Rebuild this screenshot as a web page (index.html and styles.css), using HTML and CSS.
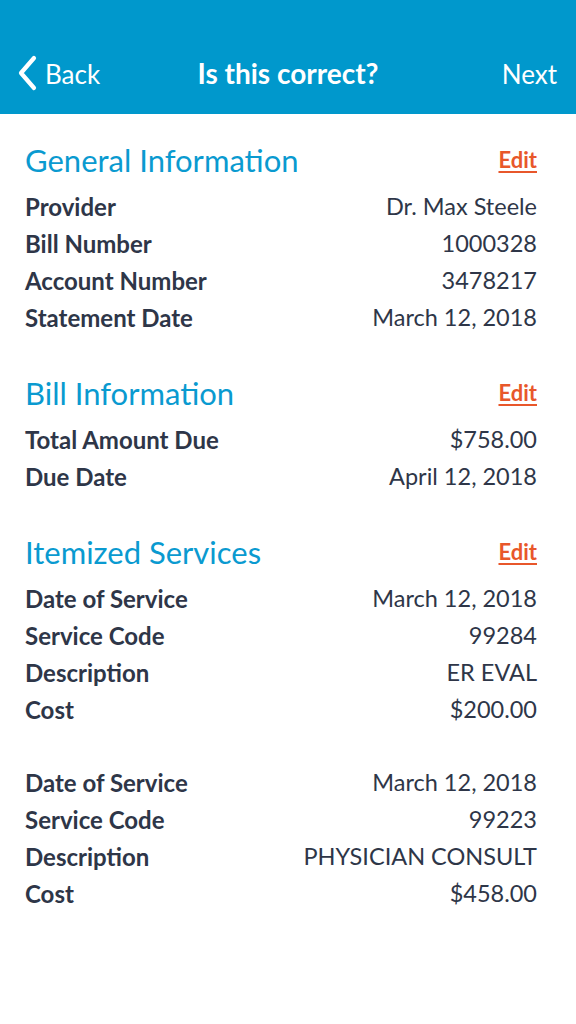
FILE: index.html
```html
<!DOCTYPE html>
<html>
<head>
<meta charset="utf-8">
<link rel="stylesheet" href="styles.css">
</head>
<body>
<header class="topbar">
  <div class="nav">
    <a class="back">
      <svg class="chev" width="22" height="36" viewBox="0 0 22 36"><path d="M17 3 L4 18 L17 33" fill="none" stroke="#fff" stroke-width="4.2" stroke-linecap="round" stroke-linejoin="round"/></svg>
      <span>Back</span>
    </a>
    <div class="title">Is this correct?</div>
    <a class="next">Next</a>
  </div>
</header>
<main class="content">
  <section class="section">
    <div class="sec-head"><h2>General Information</h2><a class="edit">Edit</a></div>
    <div class="group">
      <div class="row"><span class="label">Provider</span><span class="value">Dr. Max Steele</span></div>
      <div class="row"><span class="label">Bill Number</span><span class="value">1000328</span></div>
      <div class="row"><span class="label">Account Number</span><span class="value">3478217</span></div>
      <div class="row"><span class="label">Statement Date</span><span class="value">March 12, 2018</span></div>
    </div>
  </section>
  <section class="section">
    <div class="sec-head"><h2>Bill Information</h2><a class="edit">Edit</a></div>
    <div class="group">
      <div class="row"><span class="label">Total Amount Due</span><span class="value">$758.00</span></div>
      <div class="row"><span class="label">Due Date</span><span class="value">April 12, 2018</span></div>
    </div>
  </section>
  <section class="section">
    <div class="sec-head"><h2>Itemized Services</h2><a class="edit">Edit</a></div>
    <div class="group">
      <div class="row"><span class="label">Date of Service</span><span class="value">March 12, 2018</span></div>
      <div class="row"><span class="label">Service Code</span><span class="value">99284</span></div>
      <div class="row"><span class="label">Description</span><span class="value">ER EVAL</span></div>
      <div class="row"><span class="label">Cost</span><span class="value">$200.00</span></div>
    </div>
    <div class="group">
      <div class="row"><span class="label">Date of Service</span><span class="value">March 12, 2018</span></div>
      <div class="row"><span class="label">Service Code</span><span class="value">99223</span></div>
      <div class="row"><span class="label">Description</span><span class="value">PHYSICIAN CONSULT</span></div>
      <div class="row"><span class="label">Cost</span><span class="value">$458.00</span></div>
    </div>
  </section>
</main>
</body>
</html>
```
FILE: styles.css
```css
* { box-sizing: border-box; }
html, body { margin: 0; padding: 0; }
body {
  width: 576px;
  min-height: 1024px;
  background: #fff;
  font-family: Lato, "Open Sans", sans-serif;
  color: #2e3648;
}
.topbar {
  background: #0098cc;
  height: 114px;
  padding-top: 40px;
}
.nav {
  height: 70px;
  display: flex;
  align-items: center;
  justify-content: space-between;
  padding: 0 19px 0 17px;
  color: #fff;
  font-size: 26px;
  position: relative;
}
.back { display: flex; align-items: center; gap: 6px; margin-top: -4px; }
.back span { margin-top: 2px; }
.next { margin-top: -2px; }
.chev { display: block; }
.title {
  position: absolute;
  left: 0; right: 0;
  top: 0; bottom: 4px;
  display: flex;
  align-items: center;
  justify-content: center;
  font-weight: 700;
  font-size: 28px;
  pointer-events: none;
}
.content { padding: 26px 39px 0 25px; }
.section { margin-bottom: 37px; }
.sec-head {
  display: flex;
  justify-content: space-between;
  align-items: center;
  height: 40px;
  margin-bottom: 8px;
}
.sec-head h2 {
  margin: 0;
  font-size: 31px;
  font-weight: 400;
  color: #0a9ad0;
}
.edit {
  color: #e8572b;
  font-size: 22px;
  font-weight: 700;
  text-decoration: underline;
  text-decoration-thickness: 2px;
  text-underline-offset: 3px;
  margin-top: -2px;
}
.group + .group { margin-top: 36px; }
.row {
  display: flex;
  justify-content: space-between;
  height: 37px;
  line-height: 37px;
  font-size: 24px;
}
.label { font-weight: 700; }
.value { font-weight: 400; font-size: 23.5px; }
```
